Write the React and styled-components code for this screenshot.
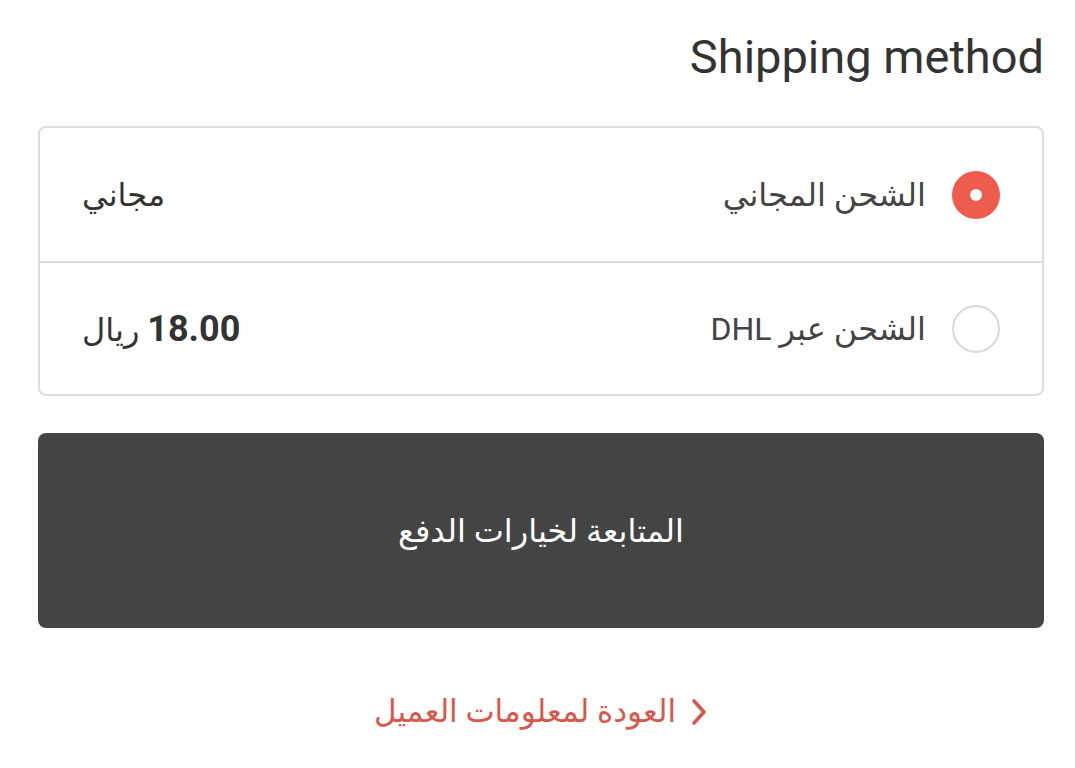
import React from 'react';
import { useState } from 'react';
import styled, { createGlobalStyle } from 'styled-components';

const GlobalStyle = createGlobalStyle`
  html, body {
    margin: 0;
    padding: 0;
    background: #ffffff;
  }
  * {
    box-sizing: border-box;
  }
`

const metodos = [
  { id: 'free', nome: 'الشحن المجاني', preco: null },
  { id: 'dhl', nome: 'الشحن عبر DHL', preco: '18.00' },
]

export default function App(){

    const [selecionado, setSelecionado] = useState('free')

    return(
        <>
        <GlobalStyle/>
        <Pagina dir="rtl">
            <Titulo>Shipping method</Titulo>
            <Caixa>
                {metodos.map((m) =>
                    <Linha key={m.id} onClick={() => setSelecionado(m.id)}>
                        <Opcao>
                            <Radio $ativo={selecionado === m.id}/>
                            <Nome>{m.nome}</Nome>
                        </Opcao>
                        {m.preco
                            ? <Preco><strong>{m.preco}</strong> ريال</Preco>
                            : <Preco>مجاني</Preco>}
                    </Linha>
                )}
            </Caixa>
            <Continuar>المتابعة لخيارات الدفع</Continuar>
            <Voltar>
                <svg width="18" height="28" viewBox="0 0 18 28" fill="none">
                    <path d="M4 3 L14 14 L4 25" stroke="#d9574b" strokeWidth="3.6" strokeLinecap="round" strokeLinejoin="round"/>
                </svg>
                <span>العودة لمعلومات العميل</span>
            </Voltar>
        </Pagina>
        </>
    )
}

const Pagina = styled.div`
padding: 29px 31px 40px 38px;
font-family: Roboto, 'DejaVu Sans', sans-serif;
color: #333333;
`

const Titulo = styled.h2`
margin: 0;
font-family: Roboto, sans-serif;
font-weight: 400;
font-size: 47px;
line-height: 56px;
color: #333333;
`

const Caixa = styled.div`
margin-top: 41px;
border: 2px solid #dddddd;
border-radius: 8px;
`

const Linha = styled.div`
display: flex;
align-items: center;
justify-content: space-between;
height: 133px;
padding: 0 42px;
cursor: pointer;

& + & {
    border-top: 2px solid #dddddd;
}
`

const Opcao = styled.div`
display: flex;
align-items: center;
gap: 26px;
`

const Radio = styled.span`
position: relative;
width: 48px;
height: 48px;
border-radius: 50%;
background: ${(p) => p.$ativo ? '#ef5b4c' : '#ffffff'};
border: ${(p) => p.$ativo ? 'none' : '2px solid #d9d9d9'};

&::after {
    content: '';
    display: ${(p) => p.$ativo ? 'block' : 'none'};
    position: absolute;
    width: 12px;
    height: 12px;
    left: 18px;
    top: 18px;
    border-radius: 50%;
    background: #ffffff;
}
`

const Nome = styled.span`
font-size: 32px;
color: #444444;
`

const Preco = styled.span`
font-size: 32px;
color: #333333;

strong {
    font-weight: 700;
    font-size: 36px;
}
`

const Continuar = styled.button`
display: flex;
align-items: center;
justify-content: center;
width: 100%;
height: 195px;
margin-top: 37px;
background: #444444;
border: none;
border-radius: 8px;
color: #ffffff;
font-family: Roboto, 'DejaVu Sans', sans-serif;
font-size: 32px;
cursor: pointer;
`

const Voltar = styled.a`
display: flex;
align-items: center;
justify-content: center;
gap: 14px;
margin-top: 62px;
color: #d9574b;
font-size: 31px;
line-height: 44px;
cursor: pointer;
`
